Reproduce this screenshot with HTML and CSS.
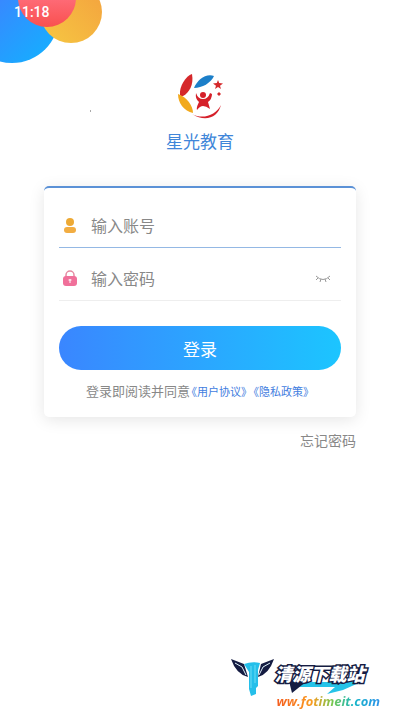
FILE: index.html
```html
<!DOCTYPE html>
<html lang="zh-CN">
<head>
<meta charset="utf-8">
<meta name="viewport" content="width=device-width, initial-scale=1">
<title>星光教育</title>
<link rel="stylesheet" href="styles.css">
</head>
<body>
<div class="screen">
  <svg class="bubbles" width="110" height="120" viewBox="0 0 110 120" aria-hidden="true">
    <defs>
      <linearGradient id="blue" x1="0" y1="0" x2="1" y2="1"><stop offset=".3" stop-color="#3a86ff"/><stop offset="1" stop-color="#10b4ff"/></linearGradient>
      <linearGradient id="red" x1="0" y1="0" x2="0" y2="1"><stop offset=".4" stop-color="#ff7180"/><stop offset="1" stop-color="#f9504f"/></linearGradient>
      <linearGradient id="gold" x1="1" y1="0" x2="0" y2="1"><stop offset=".2" stop-color="#f4a83f"/><stop offset="1" stop-color="#f6c842"/></linearGradient>
    </defs>
    <circle cx="12" cy="16" r="47" fill="url(#blue)"/>
    <circle cx="71" cy="12" r="31" fill="url(#gold)"/>
    <circle cx="47" cy="-2" r="29" fill="url(#red)"/>
    <path d="M90 111h1" stroke="#555"/>
  </svg>
  <header class="status"><time>11:18</time></header>
  <main class="login">
    <div class="brand">
      <svg class="logo" width="56" height="54" viewBox="0 0 56 54" aria-hidden="true">
        <path d="M20 6C14 8 7 18 8 27Q9 29 11 28C17 25 22 17 20 6Z" fill="#d5282b"/>
        <path d="M42 8C34 5 25 12 22 20C30 20 39 15 42 8Z" fill="#1c7fc9"/>
        <path d="M6 26C6 35 12 43 21 45C21 38 15 29 6 26Z" fill="#f2a91c"/>
        <path d="M20 46C31 52 44 47 49 37C46 49 34 55 20 46Z" fill="#d5202a"/>
        <circle cx="31" cy="27" r="3" fill="#d5202a"/>
        <path d="M24 25Q26 31 31 31Q36 31 38 25L40 26Q40 31 36 34L38 41Q34 38 31 38Q28 38 25 42Q24 40 27 34Q23 31 24 25Z" fill="#d5202a"/>
        <path d="M46 12L47.200 15L51 15.500L48 17.700L49 21L46 19L43 21L44 17.700L41 15.500L44.800 15Z" fill="#d5282b"/>
        <path d="M47 24L49 26L47 28L45 26Z" fill="#d5282b"/>
      </svg>
      <h1 class="name">星光教育</h1>
    </div>
    <form class="card">
      <label class="field field-active">
        <svg width="14" height="18" viewBox="0 0 14 18" aria-hidden="true"><circle cx="7" cy="5" r="4" fill="#eda934"/><rect x="1" y="10" width="12" height="6" rx="3" fill="#f2ad42"/></svg>
        <input class="input" type="text" placeholder="输入账号" aria-label="输入账号">
      </label>
      <div class="field">
        <svg width="14" height="18" viewBox="0 0 14 18" aria-hidden="true"><path d="M3 7V5a4 4 0 0 1 8 0V7" fill="none" stroke="#e58ba2" stroke-width="1.500"/><rect x="0" y="6" width="14" height="10" rx="3" fill="#f0709a"/><path d="M5.500 10h3M7 9v4" stroke="#fff"/></svg>
        <input class="input" type="password" placeholder="输入密码" aria-label="输入密码">
        <button class="eye" type="button" aria-label="显示密码"><svg width="16" height="8" viewBox="0 0 16 8" aria-hidden="true"><path d="M1 1Q8 8 15 1M3 3L1 5M6 4L5 7M10 4L11 7M13 3L15 5" fill="none" stroke="#999"/></svg></button>
      </div>
      <button class="submit" type="submit">登录</button>
      <p class="terms">登录即阅读并同意<a href="#terms">《用户协议》</a><a href="#privacy">《隐私政策》</a></p>
    </form>
    <a class="forgot" href="#forgot">忘记密码</a>
  </main>
  <footer class="site">
    <svg class="wing" width="44" height="40" viewBox="0 0 44 40" aria-hidden="true">
      <path d="M0 1L13 6L17 19Q5 16 0 1ZM43 1L30 6L27 19Q38 16 43 1Z" fill="#151c42"/>
      <path d="M4 5L11 9L15 17M39 5L32 9L28 17" fill="none" stroke="#dff3fb"/>
      <path d="M13 6Q21 3 29 5L27 12V28L25 30V36L20 38L18 31V14Z" fill="#25bfea"/>
      <path d="M20 8V30M24 7V25" fill="none" stroke="#6fdcf5"/>
    </svg>
    <div class="site-text">
      <svg class="swoosh" width="90" height="18" viewBox="0 0 90 18" aria-hidden="true"><path d="M24 4H86L68 12L52 16L60 9H24Z" fill="#25c3e8"/><path d="M14 3H32L17 15Z" fill="#151c42"/></svg>
      <strong class="site-name">清源下载站</strong>
      <span class="site-url">ww.fotimeit.com</span>
    </div>
  </footer>
</div>
</body>
</html>
```
FILE: styles.css
```css
* { box-sizing: border-box; }
body { margin: 0; background: #fff; font-family: Roboto, "Noto Sans CJK SC", sans-serif; }
.screen { position: relative; min-height: 100vh; display: flex; flex-direction: column; overflow: hidden; }
.bubbles { position: absolute; left: 0; top: 0; }
.status { position: relative; height: 24px; padding-left: 14px; color: #fff; font-size: 14px; line-height: 24px; font-weight: 500; }
.login { position: relative; display: flex; flex-direction: column; padding: 44px 44px 0; }
.brand { display: flex; flex-direction: column; align-items: center; }
.name { margin: 8px 0 32px; color: #4086d9; font-size: 17px; line-height: 24px; font-weight: 400; }
.card { padding: 7px 15px 12px; border-top: 2px solid #5b91d6; border-radius: 5px; background: #fff; box-shadow: 0 3px 16px #0000001a; }
.field { display: flex; align-items: center; gap: 14px; height: 53px; padding: 10px 10px 0 4px; border-bottom: 1px solid #eee; }
.field.field-active { border-bottom-color: #94b8e4; }
.input { flex: 1; min-width: 0; padding: 0; border: 0; outline: 0; background: none; color: #777; font: inherit; font-size: 16px; }
.input::placeholder { color: #888; }
.eye { display: flex; padding: 0; border: 0; background: none; }
.submit { display: block; width: 100%; height: 44px; margin: 25px 0 10px; padding: 0; border: 0; border-radius: 22px; background: linear-gradient(90deg, #3a86ff, #1cc5ff); color: #fff; font: inherit; font-size: 17px; }
.terms { margin: 0; color: #888; text-align: center; font-size: 13px; line-height: 24px; white-space: nowrap; text-spacing-trim: space-all; }
.terms a { margin-left: -4px; color: #3f7de0; font-size: 11px; text-decoration: none; }
.forgot { align-self: flex-end; margin-top: 13px; color: #888; font-size: 14px; line-height: 22px; text-decoration: none; }
.site { display: flex; align-items: flex-start; justify-content: flex-end; margin-top: auto; padding-right: 20px; }
.wing { flex: none; }
.site-text { position: relative; display: flex; flex-direction: column; padding-top: 5px; }
.swoosh { position: absolute; left: 0; top: 20px; }
.site-name { position: relative; color: #fff; font-size: 18px; line-height: 24px; font-style: italic; font-weight: 900; -webkit-text-stroke: 3px #151c42; paint-order: stroke fill; }
.site-url { position: relative; margin-top: 5px; padding-left: 2px; font-family: "Open Sans", sans-serif; font-size: 13px; line-height: 18px; font-style: italic; font-weight: 700; background: linear-gradient(90deg, #f45a20, #fa9b20 35%, #75c850 55%, #15b6c8 75%, #2b91e9); background-clip: text; color: transparent; }
```
